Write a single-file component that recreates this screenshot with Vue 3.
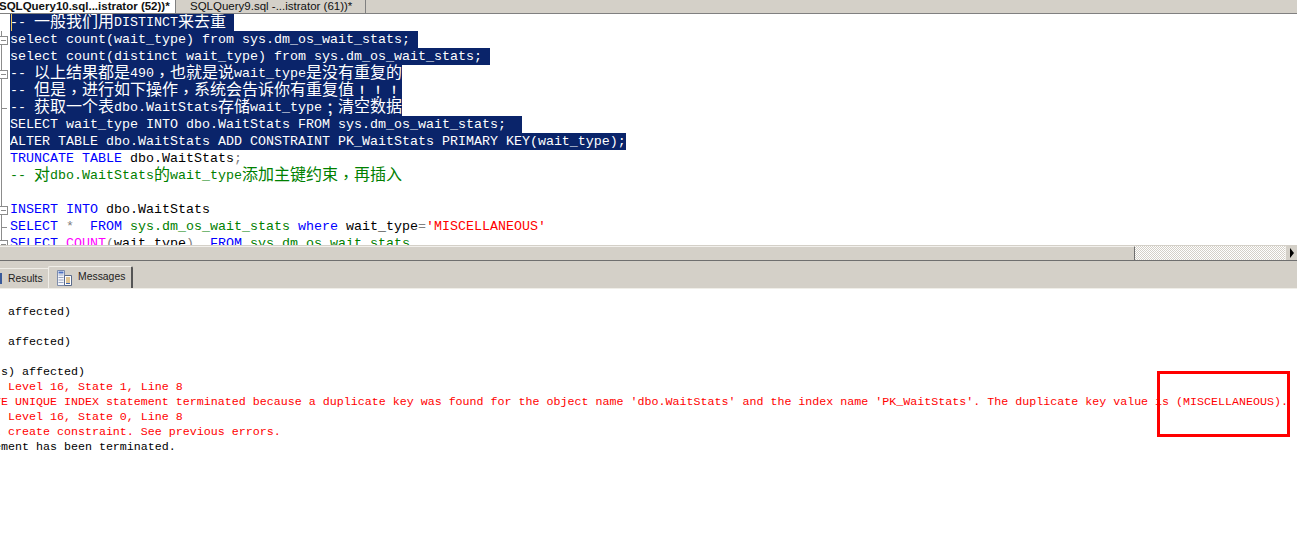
<script setup>
const CJK = /([\u3000-\u9fff\uff00-\uffef]+)/
const PUNCT = /([，！；]+)/

function pieces(text) {
  const out = []
  text.split(CJK).filter(Boolean).forEach((t) => {
    if (!CJK.test(t)) {
      out.push({ t, cls: '' })
      return
    }
    t.split(PUNCT).filter(Boolean).forEach((c) => {
      out.push({ t: c, cls: PUNCT.test(c) ? 'cn punct' : 'cn' })
    })
  })
  return out
}

const s = (t) => [{ t, c: 'sel' }]
const codeLines = [
  { mark: 'start', sel: true, segs: s('-- 一般我们用DISTINCT来去重 ') },
  { mark: 'box', sel: true, segs: s('select count(wait_type) from sys.dm_os_wait_stats; ') },
  { mark: 'line', sel: true, segs: s('select count(distinct wait_type) from sys.dm_os_wait_stats; ') },
  { mark: 'box', sel: true, segs: s('-- 以上结果都是490，也就是说wait_type是没有重复的') },
  { mark: 'line', sel: true, segs: s('-- 但是，进行如下操作，系统会告诉你有重复值！！！') },
  { mark: 'tick', sel: true, segs: s('-- 获取一个表dbo.WaitStats存储wait_type；清空数据') },
  { mark: 'line', sel: true, segs: s('SELECT wait_type INTO dbo.WaitStats FROM sys.dm_os_wait_stats;  ') },
  { mark: 'line', sel: true, segs: s('ALTER TABLE dbo.WaitStats ADD CONSTRAINT PK_WaitStats PRIMARY KEY(wait_type);') },
  { mark: 'line', segs: [{ t: 'TRUNCATE TABLE', c: 'kw' }, { t: ' dbo.WaitStats', c: 'id' }, { t: ';', c: 'op' }] },
  { mark: 'line', segs: [{ t: '-- 对dbo.WaitStats的wait_type添加主键约束，再插入', c: 'cm' }] },
  { mark: 'line', segs: [{ t: ' ', c: 'id' }] },
  { mark: 'box', segs: [{ t: 'INSERT INTO', c: 'kw' }, { t: ' dbo.WaitStats', c: 'id' }] },
  { mark: 'tick', segs: [
    { t: 'SELECT', c: 'kw' }, { t: ' *  ', c: 'op' }, { t: 'FROM', c: 'kw' }, { t: ' ', c: 'id' },
    { t: 'sys.dm_os_wait_stats', c: 'cm' }, { t: ' ', c: 'id' }, { t: 'where', c: 'kw' },
    { t: ' wait_type', c: 'id' }, { t: '=', c: 'op' }, { t: "'MISCELLANEOUS'", c: 'str' }
  ] },
  { mark: 'box', segs: [
    { t: 'SELECT', c: 'kw' }, { t: ' ', c: 'id' }, { t: 'COUNT', c: 'fn' }, { t: '(', c: 'op' },
    { t: 'wait_type', c: 'id' }, { t: ')', c: 'op' }, { t: '  ', c: 'id' }, { t: 'FROM', c: 'kw' },
    { t: ' ', c: 'id' }, { t: 'sys.dm_os_wait_stats', c: 'cm' }
  ] }
]

const messages = [
  { t: '' },
  { t: '(1 row(s) affected)' },
  { t: '' },
  { t: '(1 row(s) affected)' },
  { t: '' },
  { t: '(490 row(s) affected)' },
  { t: 'Msg 1505, Level 16, State 1, Line 8', err: true },
  { t: "The CREATE UNIQUE INDEX statement terminated because a duplicate key was found for the object name 'dbo.WaitStats' and the index name 'PK_WaitStats'. The duplicate key value is (MISCELLANEOUS).", err: true },
  { t: 'Msg 1750, Level 16, State 0, Line 8', err: true },
  { t: 'Could not create constraint. See previous errors.', err: true },
  { t: 'The statement has been terminated.' }
]
</script>

<template>
  <div class="app">
    <div class="doc-tabs">
      <div class="doc-tab active"><span class="doc-label">SQLQuery10.sql...istrator (52))*</span></div>
      <div class="doc-tab"><span>SQLQuery9.sql -...istrator (61))*</span></div>
    </div>

    <div class="editor">
      <div v-for="(line, i) in codeLines" :key="i" class="row">
        <div class="gutter" :class="line.mark"></div>
        <div class="code" :class="{ selected: line.sel }">
          <template v-for="(seg, j) in line.segs" :key="j">
            <span
              v-for="(p, k) in pieces(seg.t)"
              :key="k"
              :class="[seg.c, p.cls]"
            >{{ p.t }}</span>
          </template>
          <i v-if="i === 0" class="caret"></i>
        </div>
      </div>
    </div>

    <div class="hscroll">
      <div class="thumb"></div>
      <div class="track"></div>
      <div class="arrow"><i></i></div>
    </div>

    <div class="pane-bar">
      <div class="result-tab">
        <i class="results-edge"></i>
        <span>Results</span>
      </div>
      <div class="result-tab current">
        <svg class="msg-icon" width="15" height="18" viewBox="0 0 15 18">
          <path d="M0.5 1.5h7v15h-7z" fill="#f4f6fb" stroke="#7d8cab" />
          <path d="M1.5 2.5h5v2h-5z" fill="#4a6fc0" />
          <path d="M1.5 6h5M1.5 8.5h5M1.5 11h5M1.5 13.5h5" stroke="#9aa6c0" />
          <path d="M7.5 6.5h7v10h-7z" fill="#fff" stroke="#5a6a8a" />
          <path d="M9 9h4M9 11h4M9 13h4" stroke="#c08a2a" />
          <path d="M9 14.5h4" stroke="#3a62b0" />
        </svg>
        <span>Messages</span>
      </div>
    </div>

    <div class="messages">
      <div v-for="(m, i) in messages" :key="i" class="msg" :class="{ err: m.err }">{{ m.t }}</div>
      <div class="highlight-box"></div>
    </div>
  </div>
</template>

<style>
html, body { margin: 0; background: #fff; overflow: hidden; }
</style>

<style scoped>
.app {
  position: relative;
  width: 1297px;
  height: 538px;
  display: flex;
  flex-direction: column;
  overflow: hidden;
  background: #fff;
}

.doc-tabs {
  height: 13px;
  flex: none;
  display: flex;
  background: #d4d0c8;
  border-bottom: 1px solid #808080;
  font: 11.5px/13px "Liberation Sans", sans-serif;
  color: #111;
  overflow: hidden;
}
.doc-tab {
  width: 189px;
  padding-left: 13px;
  margin-left: 1px;
  white-space: nowrap;
  background: #d4d0c8;
  border-right: 1px solid #808080;
  box-sizing: border-box;
}
.doc-tab.active {
  width: 176px;
  margin-left: 0;
  padding-left: 0;
  background: #fff;
  font-weight: 700;
  overflow: hidden;
}
.doc-label {
  display: block;
  margin-left: -1px;
}

.editor {
  height: 231px;
  flex: none;
  overflow: hidden;
  font: 13.33px/17px "Liberation Mono", "Noto Sans CJK SC", monospace;
  white-space: pre;
}
.row {
  height: 17px;
  display: flex;
}
.gutter {
  position: relative;
  width: 10px;
  height: 17px;
  flex: none;
}
.gutter.line::before,
.gutter.tick::before,
.gutter.box::before {
  content: "";
  position: absolute;
  left: 1px;
  top: 0;
  bottom: 0;
  width: 1px;
  background: #8c8c8c;
}
.gutter.tick::after {
  content: "";
  position: absolute;
  left: 1px;
  top: 9px;
  width: 6px;
  height: 1px;
  background: #8c8c8c;
}
.gutter.box::after {
  content: "";
  position: absolute;
  left: -1px;
  top: 5px;
  width: 7px;
  height: 7px;
  border: 1px solid #8c8c8c;
  background: linear-gradient(#8c8c8c, #8c8c8c) center / 5px 1px no-repeat #fff;
}
.code {
  position: relative;
  height: 17px;
}
.code.selected {
  display: inline-block;
  background: #0a246a;
}
.caret {
  position: absolute;
  left: 1px;
  top: 0;
  width: 1px;
  height: 17px;
  background: #f3c655;
}
.code span { vertical-align: top; }
.cn {
  font-size: 16px;
  line-height: 19px;
  display: inline-block;
  height: 17px;
}
.punct {
  font-family: "Noto Sans CJK TC", "Noto Sans CJK SC", sans-serif;
}
.sel { color: #fff; }
.kw { color: #0000ff; }
.id { color: #000; }
.op { color: #808080; }
.cm { color: #008000; }
.str { color: #ff0000; }
.fn { color: #ff00ff; }

.hscroll {
  height: 16px;
  flex: none;
  display: flex;
  box-sizing: border-box;
  border-top: 1px solid #d4d0c8;
  border-bottom: 1px solid #6f6f6f;
}
.thumb {
  width: 1135px;
  flex: none;
  box-sizing: border-box;
  background: #d4d0c8;
  border-top: 1px solid #f2f0ec;
  border-right: 1px solid #6f6f6f;
}
.track {
  flex: 1;
  background: repeating-conic-gradient(#d4d0c8 0 25%, #fff 0 50%) 0 0 / 2px 2px;
}
.arrow {
  width: 12px;
  flex: none;
  display: flex;
  align-items: center;
  justify-content: center;
  background: #d4d0c8;
  border-left: 1px solid #f2f0ec;
  box-sizing: border-box;
}
.arrow i {
  width: 0;
  height: 0;
  border-left: 4px solid #000;
  border-top: 5px solid transparent;
  border-bottom: 5px solid transparent;
}

.pane-bar {
  height: 28px;
  flex: none;
  box-sizing: border-box;
  display: flex;
  align-items: flex-end;
  background: #d4d0c8;
  border-bottom: 1px solid #f0eee8;
  font: 10.4px/20px "Liberation Sans", sans-serif;
  color: #222;
}
.result-tab {
  height: 20px;
  width: 48px;
  box-sizing: border-box;
  padding-left: 8px;
  position: relative;
  border-top: 1px solid #f0eee8;
}
.results-edge {
  position: absolute;
  left: 0;
  top: 4px;
  width: 2px;
  height: 11px;
  background: #3a5a9a;
}
.result-tab.current {
  height: 22px;
  width: 85px;
  padding-left: 29px;
  display: flex;
  border-left: 1px solid #f0eee8;
  border-right: 2px solid #555;
  border-radius: 2px 2px 0 0;
  line-height: 20px;
}
.msg-icon {
  position: absolute;
  left: 8px;
  top: 2px;
}

.messages {
  position: relative;
  flex: 1;
  overflow: hidden;
  padding-top: 1px;
  font: 11.67px/15px "Liberation Mono", monospace;
  color: #000;
}
.msg {
  height: 15px;
  margin-left: -62px;
  white-space: pre;
}
.msg.err { color: #ff0000; }
.highlight-box {
  position: absolute;
  left: 1157px;
  top: 82px;
  width: 133px;
  height: 66px;
  box-sizing: border-box;
  border: 3px solid #ff0000;
}
</style>
